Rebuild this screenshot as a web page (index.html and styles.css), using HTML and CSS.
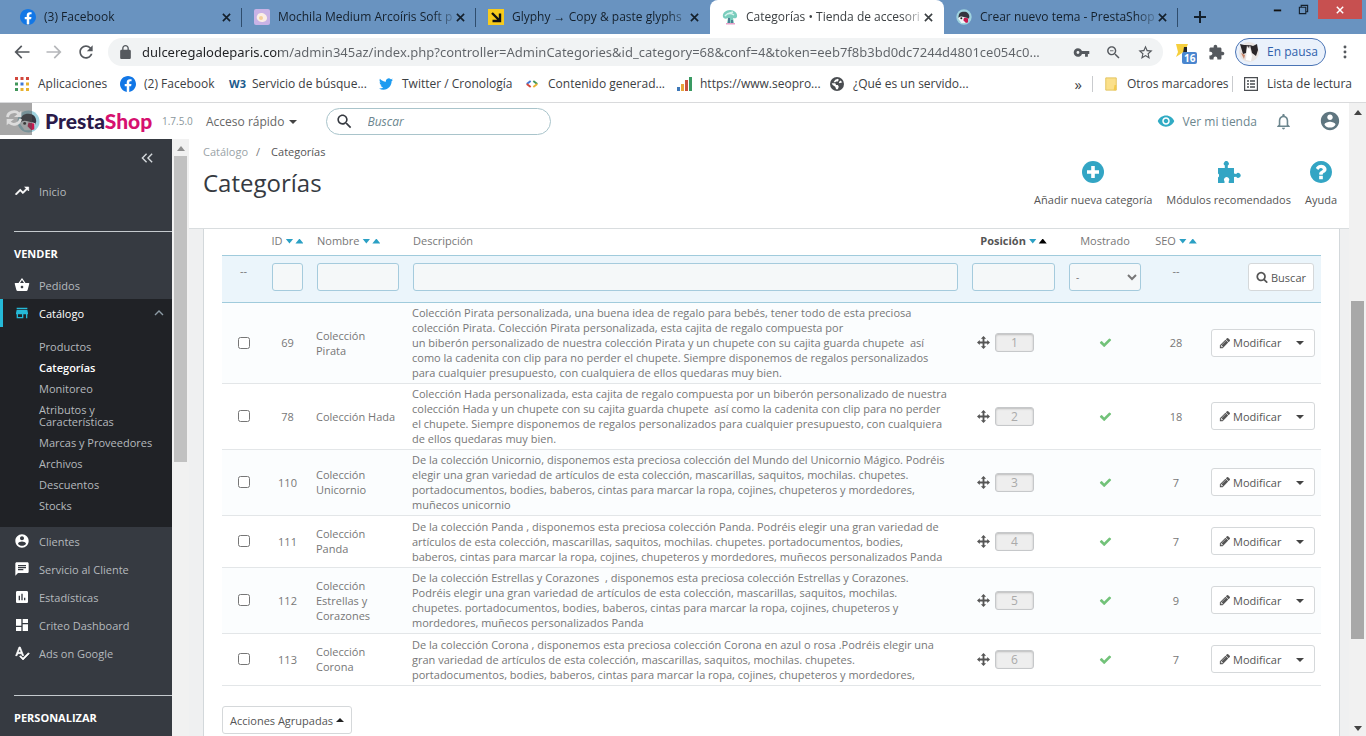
FILE: index.html
```html
<!DOCTYPE html>
<html lang="es">
<head>
<meta charset="utf-8">
<title>Categorías • Tienda de accesorios</title>
<link rel="stylesheet" href="styles.css">
</head>
<body>
<svg class="sprite" aria-hidden="true">
  <symbol id="i-fb" viewBox="0 0 24 24"><circle cx="12" cy="12" r="11" fill="#fff"/><path fill="#1277e6" d="M24 12.073c0-6.627-5.373-12-12-12s-12 5.373-12 12c0 5.99 4.388 10.954 10.125 11.854v-8.385H7.078v-3.47h3.047V9.43c0-3.007 1.792-4.669 4.533-4.669 1.312 0 2.686.235 2.686.235v2.953H15.83c-1.491 0-1.956.925-1.956 1.874v2.25h3.328l-.532 3.47h-2.796v8.385C19.612 23.027 24 18.062 24 12.073z"/></symbol>
  <symbol id="i-close" viewBox="0 0 10 10"><path d="M1 1l8 8M9 1l-8 8" fill="none" stroke="currentColor" stroke-width="1.8"/></symbol>
  <symbol id="i-preston" viewBox="0 0 24 24"><circle cx="12" cy="12" r="11.5" fill="#9fd3df"/><path d="M4 14C3 6 7 4 12 4s8 3 8 8l-1 3H5z" fill="#35363f"/><path d="M3 14c3-4 6-3 9-2s5 1 7 2l-3 7H8z" fill="#eef4f6"/><circle cx="8" cy="14" r="1.5" fill="#222"/><path d="M12 13l6 1 0 6-3 1-4-4z" fill="#c8194f"/></symbol>
  <symbol id="i-search" viewBox="0 0 24 24"><path d="M15.5 14h-.79l-.28-.27C15.41 12.59 16 11.11 16 9.5 16 5.91 13.09 3 9.5 3S3 5.91 3 9.5 5.91 16 9.5 16c1.61 0 3.09-.59 4.23-1.57l.27.28v.79l5 4.99L20.49 19l-4.99-5zm-6 0C7.01 14 5 11.99 5 9.5S7.01 5 9.5 5 14 7.01 14 9.5 11.99 14 9.5 14z"/></symbol>
  <symbol id="i-account" viewBox="0 0 24 24"><path d="M12 2C6.48 2 2 6.48 2 12s4.48 10 10 10 10-4.48 10-10S17.52 2 12 2zm0 3c1.66 0 3 1.34 3 3s-1.34 3-3 3-3-1.34-3-3 1.34-3 3-3zm0 14.2c-2.5 0-4.71-1.28-6-3.22.03-1.99 4-3.08 6-3.08 1.99 0 5.97 1.09 6 3.08-1.29 1.94-3.5 3.22-6 3.22z"/></symbol>
  <symbol id="i-move" viewBox="0 0 14 14"><path d="M7 0l2.8 3H8v3h3V4.200L14 7l-3 2.800V8H8v3h1.800L7 14l-2.800-3H6V8H3v1.800L0 7l3-2.800V6h3V3H4.200z"/></symbol>
  <symbol id="i-check" viewBox="0 0 1792 1792"><path d="M1671 566q0 40-28 68l-724 724-136 136q-28 28-68 28t-68-28l-136-136-362-362q-28-28-28-68t28-68l136-136q28-28 68-28t68 28l294 295 656-657q28-28 68-28t68 28l136 136q28 28 28 68z"/></symbol>
  <symbol id="i-pencil" viewBox="0 0 1792 1792"><path d="M491 1536l91-91-235-235-91 91v107h128v128h107zm523-928q0-22-22-22-10 0-17 7l-542 542q-7 7-7 17 0 22 22 22 10 0 17-7l542-542q7-7 7-17zm-54-192l416 416-832 832h-416v-416zm683 96q0 53-37 90l-166 166-416-416 166-165q36-38 90-38 53 0 91 38l235 234q37 39 37 91z"/></symbol>
</svg>

<header class="chrome">
  <div class="tabs">
    <div class="tab"><svg class="ico16"><use href="#i-fb"/></svg><span class="tab-title">(3) Facebook</span><button class="tab-close" aria-label="Cerrar"><svg><use href="#i-close"/></svg></button></div>
    <div class="tab"><svg class="ico16" viewBox="0 0 16 16"><rect width="16" height="16" rx="2" fill="#c9b3e6"/><path d="M3 10c-1-3 1-6 4-6s6 2 6 5-3 4-5 4-4-1-5-3z" fill="#fbeee6"/><circle cx="7" cy="9" r="2" fill="#f5cf9b"/></svg><span class="tab-title">Mochila Medium Arcoíris Soft p</span><button class="tab-close" aria-label="Cerrar"><svg><use href="#i-close"/></svg></button></div>
    <div class="tab plain"><svg class="ico16" viewBox="0 0 16 16"><rect width="16" height="16" fill="#f8cb1c"/><path d="M4 4l7 7M12 4.500V12H4.500" fill="none" stroke="#111" stroke-width="2.400"/></svg><span class="tab-title">Glyphy → Copy &amp; paste glyphs</span><button class="tab-close" aria-label="Cerrar"><svg><use href="#i-close"/></svg></button></div>
    <div class="tab active"><svg class="ico16" viewBox="0 0 16 16"><path d="M1 8c-1-4 3-7 7-7s8 3 7 7c-1 2-3 1-4 1l1 5H5l1-5C4 10 2 10 1 8z" fill="#79cdbd"/><path d="M3 7c2-3 6-3 9-1M5 5l6-2" stroke="#d6f3ec" stroke-width="1.500" fill="none"/><path d="M6 14V9h2v5zm3-3h2v3H9z" fill="#4b7f93"/><path d="M4 14h9v1.500H4z" fill="#e7a1c8"/></svg><span class="tab-title">Categorías • Tienda de accesori</span><button class="tab-close" aria-label="Cerrar"><svg><use href="#i-close"/></svg></button></div>
    <div class="tab"><svg class="ico16"><use href="#i-preston"/></svg><span class="tab-title">Crear nuevo tema - PrestaShop</span><button class="tab-close" aria-label="Cerrar"><svg><use href="#i-close"/></svg></button></div>
    <button class="new-tab" aria-label="Nueva pestaña"><svg viewBox="0 0 12 12"><path d="M6 0v12M0 6h12" stroke="#14202c" stroke-width="2"/></svg></button>
    <div class="win">
      <button aria-label="Minimizar"><svg viewBox="0 0 12 12"><path d="M2 7h8" stroke="#111" stroke-width="2"/></svg></button>
      <button aria-label="Restaurar"><svg viewBox="0 0 12 12"><path d="M1.500 3.500h7v7h-7zM3.500 3V1.500h7v7H9" fill="none" stroke="#14202c" stroke-width="1.200"/></svg></button>
      <button class="win-close" aria-label="Cerrar ventana"><svg viewBox="0 0 10 10"><path d="M1 1l8 8M9 1l-8 8" stroke="#fff" stroke-width="1.800"/></svg></button>
    </div>
  </div>

  <div class="toolbar">
    <button aria-label="Atrás"><svg viewBox="0 0 24 24"><path d="M21 11H6.800l5.600-5.600L11 4l-8 8 8 8 1.400-1.400L6.800 13H21z"/></svg></button>
    <button class="dim" aria-label="Adelante"><svg viewBox="0 0 24 24"><path d="M13 4l-1.400 1.400 5.600 5.600H3v2h14.200l-5.600 5.600L13 20l8-8z"/></svg></button>
    <button aria-label="Recargar"><svg viewBox="0 0 24 24"><path d="M17.650 6.350C16.200 4.900 14.210 4 12 4c-4.420 0-7.990 3.580-7.990 8s3.570 8 7.990 8c3.730 0 6.840-2.550 7.730-6h-2.080c-.82 2.330-3.040 4-5.650 4-3.310 0-6-2.690-6-6s2.690-6 6-6c1.660 0 3.140.69 4.220 1.780L13 11h7V4l-2.350 2.350z"/></svg></button>
    <div class="omnibox">
      <svg class="lock" viewBox="4 1 16 21"><path d="M18 8h-1V6c0-2.760-2.240-5-5-5S7 3.240 7 6v2H6c-1.100 0-2 .9-2 2v10c0 1.100.9 2 2 2h12c1.100 0 2-.9 2-2V10c0-1.100-.9-2-2-2zM9 6c0-1.660 1.340-3 3-3s3 1.340 3 3v2H9V6z"/></svg>
      <input class="url" type="text" aria-label="Dirección" value="dulceregalodeparis.com/admin345az/index.php?controller=AdminCategories&amp;id_category=68&amp;conf=4&amp;token=eeb7f8b3bd0dc7244d4801ce054c0...">
      <button aria-label="Contraseñas"><svg viewBox="0 0 24 24"><path d="M12.650 10C11.830 7.670 9.610 6 7 6c-3.310 0-6 2.690-6 6s2.690 6 6 6c2.610 0 4.830-1.670 5.650-4H17v4h4v-4h2v-4H12.650zM7 14c-1.100 0-2-.9-2-2s.9-2 2-2 2 .9 2 2-.9 2-2 2z"/></svg></button>
      <button aria-label="Zoom"><svg viewBox="0 0 24 24"><use href="#i-search"/><path d="M7 9h5v1.200H7z"/></svg></button>
      <button aria-label="Favorito"><svg viewBox="0 0 24 24"><path d="M22 9.240l-7.190-.62L12 2 9.190 8.630 2 9.240l5.460 4.730L5.820 21 12 17.270 18.180 21l-1.630-7.030L22 9.240zM12 15.400l-3.760 2.270 1-4.280-3.320-2.880 4.380-.38L12 6.100l1.710 4.040 4.380.38-3.320 2.880 1 4.280L12 15.400z"/></svg></button>
    </div>
    <button class="ext" aria-label="Extensión"><svg viewBox="0 0 16 16"><path d="M0 0h12L9 7 0 13l2-5z" fill="#f6cf3d"/><path d="M8 3h3v6H7z" fill="#222"/></svg><span class="badge">16</span></button>
    <button aria-label="Extensiones"><svg class="puzzle" viewBox="0 0 24 24"><path d="M20.500 11H19V7c0-1.100-.9-2-2-2h-4V3.500C13 2.120 11.880 1 10.500 1S8 2.120 8 3.500V5H4c-1.100 0-1.990.9-1.990 2v3.800H3.500c1.490 0 2.700 1.210 2.700 2.700s-1.210 2.700-2.700 2.700H2V20c0 1.100.9 2 2 2h3.800v-1.500c0-1.490 1.210-2.700 2.700-2.700 1.490 0 2.700 1.210 2.700 2.700V22H17c1.100 0 2-.9 2-2v-4h1.500c1.380 0 2.500-1.120 2.500-2.500S21.880 11 20.500 11z"/></svg></button>
    <button class="profile"><svg viewBox="0 0 20 20"><circle cx="10" cy="10" r="10" fill="#e9e4e2"/><path d="M1 2l4 1 3 0-1 8-3 1zM11 3l3 1 4-2 1 6-2 6-4-3z" fill="#2a2629"/><path d="M7 3l4 0-1 3z" fill="#4a4548"/><path d="M8 6l3 1 2 7-1 5-5-1z" fill="#fff"/><path d="M2 11l4 2-1 4z" fill="#c9876b"/></svg>En pausa</button>
    <button class="kebab" aria-label="Menú"><svg viewBox="0 0 24 24"><circle cx="12" cy="4.500" r="2.200"/><circle cx="12" cy="12" r="2.200"/><circle cx="12" cy="19.500" r="2.200"/></svg></button>
  </div>

  <nav class="bookmarks">
    <a href="#"><svg class="ico14" viewBox="0 0 14 14"><path d="M0 0h3v3H0zM5.500 0h3v3h-3zM11 0h3v3h-3z" fill="#d2473c"/><path d="M0 5.500h3v3H0z" fill="#41965a"/><path d="M5.500 5.500h3v3h-3z" fill="#3f78d8"/><path d="M11 5.500h3v3h-3zM5.500 11h3v3h-3z" fill="#e8b22f"/><path d="M0 11h3v3H0z" fill="#41965a"/><path d="M11 11h3v3h-3z" fill="#e8b22f"/></svg>Aplicaciones</a>
    <a href="#"><svg class="ico16"><use href="#i-fb"/></svg>(2) Facebook</a>
    <a href="#"><b class="w3">W3</b>Servicio de búsque...</a>
    <a href="#"><svg class="ico14" viewBox="0 0 24 24"><path fill="#1d9bf0" d="M23.953 4.570a10 10 0 01-2.825.775 4.958 4.958 0 002.163-2.723c-.951.555-2.005.959-3.127 1.184a4.920 4.920 0 00-8.384 4.482C7.690 8.095 4.067 6.130 1.640 3.162a4.822 4.822 0 00-.666 2.475c0 1.710.87 3.213 2.188 4.096a4.904 4.904 0 01-2.228-.616v.06a4.923 4.923 0 003.946 4.827 4.996 4.996 0 01-2.212.085 4.936 4.936 0 004.604 3.417 9.867 9.867 0 01-6.102 2.105c-.39 0-.779-.023-1.170-.067a13.995 13.995 0 007.557 2.209c9.053 0 13.998-7.496 13.998-13.985 0-.21 0-.42-.015-.63A9.935 9.935 0 0024 4.590z"/></svg>Twitter / Cronología</a>
    <a href="#"><svg class="ico14" viewBox="0 0 16 16"><path d="M6.500 4.500L2 8" stroke="#3f78d8" stroke-width="2.200"/><path d="M2 8l4.500 3.500" stroke="#d2473c" stroke-width="2.200"/><path d="M9.500 4.500L14 8" stroke="#41965a" stroke-width="2.200"/><path d="M14 8l-4.500 3.500" stroke="#e8b22f" stroke-width="2.200"/></svg>Contenido generad...</a>
    <a href="#"><svg class="ico16" viewBox="0 0 16 16"><path d="M1 11h3v4H1z" fill="#3f78b8"/><path d="M5 8h3v7H5z" fill="#e8a43a"/><path d="M9 4h3v11H9z" fill="#c9503f"/><path d="M13 1h3v14h-3z" fill="#3a9a63"/></svg>https://www.seopro...</a>
    <a href="#"><svg class="ico14" viewBox="0 0 16 16"><circle cx="8" cy="8" r="8" fill="#4a4d51"/><path d="M2 7l4 0 1 2h2l1 2-1 3-2 0-1-3-3-2zM6 3l3-1 1 1-1 2H7L6 6H4zM14 6l-3 1-1-1 2-2z" fill="#fff"/></svg>¿Qué es un servido...</a>
    <button class="more" aria-label="Más marcadores">»</button>
    <a href="#" class="ruled"><svg class="ico14" viewBox="0 0 16 16"><path d="M2 1h12v14H2z" fill="#fbe08a" stroke="#e0bf57"/><path d="M12 9h2v6h-3z" fill="#f3c94c"/></svg>Otros marcadores</a>
    <a href="#" class="ruled"><svg class="ico14" viewBox="1 1 14 14"><path d="M1.500 1.500h13v13h-13z" fill="none" stroke="#4a4d51" stroke-width="1.400"/><path d="M4 5h2M7 5h5M4 8h2M7 8h5M4 11h2M7 11h5" stroke="#4a4d51" stroke-width="1.400"/></svg>Lista de lectura</a>
  </nav>
</header>

<div class="viewport">
  <div class="page">
    <header class="top">
      <div class="brand"><svg class="preston" viewBox="0 0 24 24"><use href="#i-preston"/></svg><span class="sync"><svg viewBox="0 0 24 24"><path d="M5 11a7 6 0 0 1 12-4M19 13a7 6 0 0 1-12 4" fill="none" stroke="#dcdcdc" stroke-width="3"/><path d="M20 4v7h-8zM4 20v-7h8z" fill="#dcdcdc"/></svg></span><span class="name">Presta<em>Shop</em></span></div>
      <span class="version">1.7.5.0</span>
      <button class="quick">Acceso rápido <i class="caret"></i></button>
      <label class="search"><svg><use href="#i-search"/></svg><input type="text" placeholder="Buscar" aria-label="Buscar"></label>
      <a class="shop" href="#"><svg viewBox="0 0 24 24"><path d="M12 4.500C7 4.500 2.730 7.610 1 12c1.730 4.390 6 7.500 11 7.500s9.270-3.110 11-7.500c-1.730-4.390-6-7.500-11-7.500zM12 17c-2.760 0-5-2.240-5-5s2.240-5 5-5 5 2.240 5 5-2.240 5-5 5zm0-8c-1.660 0-3 1.340-3 3s1.340 3 3 3 3-1.340 3-3-1.340-3-3-3z"/></svg>Ver mi tienda</a>
      <button class="bell" aria-label="Notificaciones"><svg viewBox="0 0 24 24"><path d="M12 22c1.100 0 2-.9 2-2h-4c0 1.100.9 2 2 2zm6-6v-5c0-3.070-1.630-5.640-4.500-6.320V4c0-.83-.67-1.500-1.500-1.500s-1.500.67-1.500 1.500v.68C7.640 5.360 6 7.920 6 11v5l-2 2v1h16v-1l-2-2zm-2 1H8v-6c0-2.480 1.510-4.500 4-4.500s4 2.020 4 4.500v6z"/></svg></button>
      <button class="user" aria-label="Cuenta"><svg><use href="#i-account"/></svg></button>
    </header>

    <div class="body">
      <nav class="side">
        <button class="collapse" aria-label="Contraer menú"><svg viewBox="0 0 14 10"><path d="M6 0.500L1.500 5 6 9.500M12 0.500L7.500 5 12 9.500" fill="none" stroke="#d5d9dc" stroke-width="1.500"/></svg></button>
        <a class="item" href="#"><svg viewBox="0 0 24 24"><path d="M16 6l2.290 2.290-4.880 4.880-4-4L2 16.590 3.410 18l6-6 4 4 6.300-6.290L22 12V6z" stroke="#fff"/></svg>Inicio</a>
        <h2 class="first">VENDER</h2>
        <a class="item" href="#"><svg viewBox="0 0 24 24"><path d="M17.210 9l-4.380-6.560c-.19-.28-.51-.42-.83-.42-.32 0-.64.14-.83.43L6.790 9H2c-.55 0-1 .45-1 1 0 .09.01.18.04.27l2.540 9.270c.23.84 1 1.460 1.920 1.460h13c.92 0 1.690-.62 1.930-1.460l2.540-9.270L23 10c0-.55-.45-1-1-1h-4.790zM9 9l3-4.400L15 9H9zm3 8c-1.100 0-2-.9-2-2s.9-2 2-2 2 .9 2 2-.9 2-2 2z"/></svg>Pedidos</a>
        <div class="open">
          <a class="item current" href="#"><svg viewBox="0 0 24 24"><path d="M20 4H4v2h16V4zm1 10v-2l-1-5H4l-1 5v2h1v6h10v-6h4v6h2v-6h1zm-9 4H6v-4h6v4z"/></svg>Catálogo<svg class="up" viewBox="0 0 10 6"><path d="M1 5l4-4 4 4" fill="none" stroke="#8d9ba5" stroke-width="1.400"/></svg></a>
          <ul>
            <li><a href="#">Productos</a></li>
            <li><a href="#" class="on">Categorías</a></li>
            <li><a href="#">Monitoreo</a></li>
            <li><a href="#">Atributos y<br>Características</a></li>
            <li><a href="#">Marcas y Proveedores</a></li>
            <li><a href="#">Archivos</a></li>
            <li><a href="#">Descuentos</a></li>
            <li><a href="#">Stocks</a></li>
          </ul>
        </div>
        <a class="item" href="#"><svg><use href="#i-account"/></svg>Clientes</a>
        <a class="item" href="#"><svg viewBox="0 0 24 24"><path d="M20 2H4c-1.100 0-1.990.9-1.990 2L2 22l4-4h14c1.100 0 2-.9 2-2V4c0-1.100-.9-2-2-2zM6 9h12v2H6V9zm8 5H6v-2h8v2zm4-6H6V6h12v2z"/></svg>Servicio al Cliente</a>
        <a class="item" href="#"><svg viewBox="0 0 24 24"><path d="M19 3H5c-1.100 0-2 .9-2 2v14c0 1.100.9 2 2 2h14c1.100 0 2-.9 2-2V5c0-1.100-.9-2-2-2zM9 17H7v-7h2v7zm4 0h-2V7h2v10zm4 0h-2v-4h2v4z"/></svg>Estadísticas</a>
        <a class="item" href="#"><svg viewBox="0 0 24 24"><path d="M3 13h8V3H3v10zm0 8h8v-6H3v6zm10 0h8V11h-8v10zm0-18v6h8V3h-8z"/></svg>Criteo Dashboard</a>
        <a class="item" href="#"><svg viewBox="0 0 24 24"><path d="M12.450 16h2.090L9.430 3H7.570L2.460 16h2.090l1.120-3h5.640l1.140 3zm-6.020-5L8.500 5.480 10.570 11H6.430zm15.160.59l-8.090 8.090L9.830 16l-1.410 1.410 5.090 5.090L23 13l-1.410-1.410z" stroke="#fff"/></svg>Ads on Google</a>
        <h2>PERSONALIZAR</h2>
      </nav>
      <div class="bar side-bar"><i class="arrow up"></i><div class="thumb"></div></div>

      <main>
        <div class="head">
          <div>
            <p class="crumbs"><a href="#">Catálogo</a><span>/</span>Categorías</p>
            <h1>Categorías</h1>
          </div>
          <div class="actions">
            <a href="#"><svg viewBox="0 0 22 22"><circle cx="11" cy="11" r="11"/><path d="M11 5v12M5 11h12" stroke="#fff" stroke-width="3.600"/></svg>Añadir nueva categoría</a>
            <a href="#"><svg class="wide" viewBox="0 0 24 22"><path d="M1 7h6.800V4.600A2.500 2.500 0 1 1 10.800 4.600V7H17v5.600l2.200.4A2.400 2.400 0 1 1 19.200 15.800L17 16v6h-5.300v-1.800a2.600 2.600 0 1 0-4.200 0V22H1v-5.500l1-1v-2l-1-1z"/></svg>Módulos recomendados</a>
            <a href="#"><svg viewBox="128 128 1536 1536"><path d="M1024 1376v-192q0-14-9-23t-23-9h-192q-14 0-23 9t-9 23v192q0 14 9 23t23 9h192q14 0 23-9t9-23zm256-672q0-88-55.500-163t-138.500-116-170-41q-243 0-371 213-15 24 8 42l132 100q7 6 19 6 16 0 25-12 53-68 86-92 34-24 86-24 48 0 85.500 26t37.500 59q0 38-20 61t-68 45q-63 28-115.500 86.500t-52.500 125.500v36q0 14 9 23t23 9h192q14 0 23-9t9-23q0-19 21.500-49.500t54.500-49.500q32-18 49-28.500t46-35 44.500-48 28-60.500 12.500-81zm384 192q0 209-103 385.500t-279.500 279.500-385.500 103-385.500-103-279.500-279.500-103-385.500 103-385.500 279.500-279.500 385.500-103 385.500 103 279.500 279.500 103 385.500z"/></svg>Ayuda</a>
          </div>
        </div>

        <section class="panel">
          <table>
            <colgroup><col class="c-check"><col class="c-id"><col class="c-name"><col><col class="c-pos"><col class="c-show"><col class="c-seo"><col class="c-act"></colgroup>
            <thead>
              <tr>
                <th></th>
                <th class="mid">ID <i class="sort"></i></th>
                <th>Nombre <i class="sort"></i></th>
                <th>Descripción</th>
                <th class="mid"><b>Posición</b> <i class="sort asc"></i></th>
                <th class="mid">Mostrado</th>
                <th class="mid seo">SEO <i class="sort"></i></th>
                <th></th>
              </tr>
              <tr class="filter">
                <td class="mid dash">--</td>
                <td><input type="text" aria-label="ID"></td>
                <td><input type="text" aria-label="Nombre"></td>
                <td><input type="text" aria-label="Descripción"></td>
                <td><input type="text" aria-label="Posición"></td>
                <td><select aria-label="Mostrado"><option>-</option></select></td>
                <td class="mid dash">--</td>
                <td class="right"><button class="btn"><svg class="lens" viewBox="0 0 1792 1792"><path d="M1216 832q0-185-131.500-316.500t-316.500-131.500-316.500 131.500-131.500 316.500 131.500 316.500 316.500 131.500 316.500-131.500 131.500-316.500zm512 832q0 52-38 90t-90 38q-54 0-90-38l-343-342q-179 124-399 124-143 0-273.500-55.500t-225-150-150-225-55.500-273.500 55.500-273.500 150-225 225-150 273.500-55.500 273.500 55.500 225 150 150 225 55.500 273.500q0 220-124 399l343 343q37 37 37 90z"/></svg>Buscar</button></td>
              </tr>
            </thead>
            <tbody>
              <tr>
                <td class="mid"><input type="checkbox" aria-label="69"></td><td class="mid">69</td><td>Colección<br>Pirata</td>
                <td class="desc">Colección Pirata personalizada, una buena idea de regalo para bebés, tener todo de esta preciosa<br>colección Pirata. Colección Pirata personalizada, esta cajita de regalo compuesta por<br>un biberón personalizado de nuestra colección Pirata y un chupete con su cajita guarda chupete&nbsp; así<br>como la cadenita con clip para no perder el chupete. Siempre disponemos de regalos personalizados<br>para cualquier presupuesto, con cualquiera de ellos quedaras muy bien.</td>
                <td><div class="pos"><svg><use href="#i-move"/></svg><span>1</span></div></td><td class="mid"><svg class="ok"><use href="#i-check"/></svg></td><td class="mid">28</td>
                <td class="right"><div class="split"><a href="#"><svg><use href="#i-pencil"/></svg>Modificar</a><button aria-label="Más acciones"><i class="caret"></i></button></div></td>
              </tr>
              <tr>
                <td class="mid"><input type="checkbox" aria-label="78"></td><td class="mid">78</td><td>Colección Hada</td>
                <td class="desc">Colección Hada personalizada, esta cajita de regalo compuesta por un biberón personalizado de nuestra<br>colección Hada y un chupete con su cajita guarda chupete&nbsp; así como la cadenita con clip para no perder<br>el chupete. Siempre disponemos de regalos personalizados para cualquier presupuesto, con cualquiera<br>de ellos quedaras muy bien.</td>
                <td><div class="pos"><svg><use href="#i-move"/></svg><span>2</span></div></td><td class="mid"><svg class="ok"><use href="#i-check"/></svg></td><td class="mid">18</td>
                <td class="right"><div class="split"><a href="#"><svg><use href="#i-pencil"/></svg>Modificar</a><button aria-label="Más acciones"><i class="caret"></i></button></div></td>
              </tr>
              <tr>
                <td class="mid"><input type="checkbox" aria-label="110"></td><td class="mid">110</td><td>Colección<br>Unicornio</td>
                <td class="desc">De la colección Unicornio, disponemos esta preciosa colección del Mundo del Unicornio Mágico. Podréis<br>elegir una gran variedad de artículos de esta colección, mascarillas, saquitos, mochilas. chupetes.<br>portadocumentos, bodies, baberos, cintas para marcar la ropa, cojines, chupeteros y mordedores,<br>muñecos unicornio</td>
                <td><div class="pos"><svg><use href="#i-move"/></svg><span>3</span></div></td><td class="mid"><svg class="ok"><use href="#i-check"/></svg></td><td class="mid">7</td>
                <td class="right"><div class="split"><a href="#"><svg><use href="#i-pencil"/></svg>Modificar</a><button aria-label="Más acciones"><i class="caret"></i></button></div></td>
              </tr>
              <tr>
                <td class="mid"><input type="checkbox" aria-label="111"></td><td class="mid">111</td><td>Colección<br>Panda</td>
                <td class="desc">De la colección Panda , disponemos esta preciosa colección Panda. Podréis elegir una gran variedad de<br>artículos de esta colección, mascarillas, saquitos, mochilas. chupetes. portadocumentos, bodies,<br>baberos, cintas para marcar la ropa, cojines, chupeteros y mordedores, muñecos personalizados Panda</td>
                <td><div class="pos"><svg><use href="#i-move"/></svg><span>4</span></div></td><td class="mid"><svg class="ok"><use href="#i-check"/></svg></td><td class="mid">7</td>
                <td class="right"><div class="split"><a href="#"><svg><use href="#i-pencil"/></svg>Modificar</a><button aria-label="Más acciones"><i class="caret"></i></button></div></td>
              </tr>
              <tr>
                <td class="mid"><input type="checkbox" aria-label="112"></td><td class="mid">112</td><td>Colección<br>Estrellas y<br>Corazones</td>
                <td class="desc">De la colección Estrellas y Corazones&nbsp; , disponemos esta preciosa colección Estrellas y Corazones.<br>Podréis elegir una gran variedad de artículos de esta colección, mascarillas, saquitos, mochilas.<br>chupetes. portadocumentos, bodies, baberos, cintas para marcar la ropa, cojines, chupeteros y<br>mordedores, muñecos personalizados Panda</td>
                <td><div class="pos"><svg><use href="#i-move"/></svg><span>5</span></div></td><td class="mid"><svg class="ok"><use href="#i-check"/></svg></td><td class="mid">9</td>
                <td class="right"><div class="split"><a href="#"><svg><use href="#i-pencil"/></svg>Modificar</a><button aria-label="Más acciones"><i class="caret"></i></button></div></td>
              </tr>
              <tr>
                <td class="mid"><input type="checkbox" aria-label="113"></td><td class="mid">113</td><td>Colección<br>Corona</td>
                <td class="desc">De la colección Corona , disponemos esta preciosa colección Corona en azul o rosa .Podréis elegir una<br>gran variedad de artículos de esta colección, mascarillas, saquitos, mochilas. chupetes.<br>portadocumentos, bodies, baberos, cintas para marcar la ropa, cojines, chupeteros y mordedores,</td>
                <td><div class="pos"><svg><use href="#i-move"/></svg><span>6</span></div></td><td class="mid"><svg class="ok"><use href="#i-check"/></svg></td><td class="mid">7</td>
                <td class="right"><div class="split"><a href="#"><svg><use href="#i-pencil"/></svg>Modificar</a><button aria-label="Más acciones"><i class="caret"></i></button></div></td>
              </tr>
            </tbody>
          </table>
          <button class="btn bulk">Acciones Agrupadas <i class="caret flip"></i></button>
        </section>
      </main>
    </div>
  </div>
  <div class="bar page-bar"><i class="arrow up"></i><div class="thumb"></div><i class="arrow down"></i></div>
</div>
</body>
</html>
```

FILE: styles.css
```css
* { box-sizing: border-box; }

body {
  margin: 0;
  height: 100vh;
  display: flex;
  flex-direction: column;
  overflow: hidden;
  font: 11px/15px "Open Sans", "Noto Sans", sans-serif;
  color: #777;
  background: #fff;
}

a { color: inherit; text-decoration: none; }
button, input, select { font: inherit; color: inherit; }
button { padding: 0; border: 0; background: none; }
svg { display: block; flex: none; fill: currentColor; }
.sprite { position: absolute; width: 0; height: 0; }
.ico16 { width: 16px; height: 16px; }
.ico14 { width: 14px; height: 14px; margin-right: 1px; }

/* Browser window */
.chrome {
  flex: none;
  border-bottom: 1px solid #d9dadc;
  font: 12px/16px "Open Sans", "Noto Sans", sans-serif;
  color: #3c4043;
}

.tabs { display: flex; height: 34px; padding-left: 8px; background: #6993c0; color: #14202c; }
.tab { display: flex; align-items: center; flex: 0 1 234px; min-width: 0; gap: 8px; padding: 0 11px 0 12px; position: relative; }
.tab:not(.plain):not(.active)::after { content: ""; position: absolute; right: 0; top: 8px; width: 1px; height: 19px; background: #2f4d6d; }
.tab.active { background: #fff; border-radius: 8px 8px 0 0; color: #3c4043; }
.tab-title { flex: 1; min-width: 0; overflow: hidden; white-space: nowrap; margin-right: -6px; mask-image: linear-gradient(to right, #000 88%, rgba(0, 0, 0, .2)); }
.tab-close svg { width: 9px; height: 9px; }
.new-tab { width: 44px; display: grid; place-items: center; }
.new-tab svg { width: 12px; height: 12px; }
.win { margin-left: auto; display: flex; align-items: flex-start; padding-right: 4px; }
.win button { width: 26px; height: 19px; display: grid; place-items: center; }
.win svg { width: 11px; height: 11px; }
.win .win-close { width: 44px; margin-left: 2px; background: #c75050; }
.win .win-close svg { width: 8px; height: 8px; }

.toolbar { display: flex; align-items: center; height: 36px; padding: 0 10px 0 12px; color: #55595e; }
.toolbar > button { width: 32px; display: grid; place-items: center start; }
.toolbar svg { width: 20px; height: 20px; }
.toolbar .dim { color: #b5b7ba; }
.omnibox { flex: 1; display: flex; align-items: center; height: 28px; padding: 0 2px 0 12px; border-radius: 14px; background: #f1f3f4; }
.omnibox .lock { width: 11px; height: 14px; margin-right: 11px; }
.omnibox button { width: 32px; display: grid; place-items: center; }
.omnibox button svg { width: 17px; height: 17px; }
.url {
  flex: 1; min-width: 0; padding: 0; border: 0; outline: 0;
  font-family: "Noto Sans", sans-serif; font-size: 13px; line-height: 20px; color: transparent;
  background: linear-gradient(to right, #202124 137px, #5f6368 137px);
  background-clip: text; -webkit-background-clip: text;
}
.toolbar .ext { position: relative; margin-left: 13px; }
.toolbar .ext svg { width: 16px; height: 16px; }
.badge { position: absolute; left: 6px; top: 8px; padding: 0 2px; border-radius: 2px; background: #4a86cf; color: #fff; font-size: 10px; font-weight: 700; line-height: 12px; }
.toolbar .puzzle { width: 17px; height: 17px; }
.toolbar .profile { display: flex; align-items: center; gap: 8px; width: 91px; height: 28px; margin-left: -5px; padding-left: 3px; border: 1px solid #4a74b5; border-radius: 14px; background: #eaf1fb; color: #2f5fab; white-space: nowrap; }
.toolbar .kebab { width: 20px; margin-left: 10px; }
.kebab svg { width: 18px; height: 16px; }

.bookmarks { display: grid; grid-template-columns: 105px 109px 150px 146px 151px 154px 1fr 35px 140px auto; align-items: center; height: 32px; padding: 0 14px 4px 15px; white-space: nowrap; }
.bookmarks a { display: flex; align-items: center; gap: 8px; }
.bookmarks .more { justify-self: end; margin-right: 10px; font-size: 15px; }
.bookmarks .ruled { padding-left: 11px; border-left: 1px solid #c9cbce; }
.w3 { width: 15px; color: #1c5a8c; font-size: 11px; }

/* Scroll bars */
.viewport { flex: 1; min-height: 0; display: flex; }
.page { flex: 1; min-width: 0; display: flex; flex-direction: column; }
.bar { flex: none; width: 17px; display: flex; flex-direction: column; align-items: center; background: #f1f1f1; }
.bar .thumb { width: 13px; background: #c1c1c1; }
.bar .arrow { border: 4px solid transparent; border-top-width: 0; border-bottom: 5px solid #8e8e8e; margin: 7px 0 5px; }
.side-bar .thumb { flex: 0 0 306px; }
.page-bar .thumb { flex: 0 0 338px; margin: 181px 0 auto; background: #a8a8a8; }
.page-bar .arrow { border-bottom-color: #444; }
.page-bar .arrow.down { border-bottom: 0; border-top: 5px solid #444; }

/* Back office header */
.top { display: flex; align-items: center; height: 36px; flex: none; font-size: 12px; color: #6c868e; }
.brand { position: relative; display: flex; align-items: center; height: 36px; width: 162px; padding-left: 17px; }
.preston { width: 23px; height: 23px; }
.sync { position: absolute; left: 0; top: 0; width: 32px; height: 32px; background: rgba(80, 80, 80, .5); }
.sync svg { width: 22px; height: 24px; margin: 3px 0 0 3px; }
.name { margin-left: 5px; font: 900 21px/24px Lato, sans-serif; color: #2a1a4a; }
.name em { font-style: normal; color: #d6106f; }
.version { width: 44px; font-size: 10px; color: #8a979c; }
.quick { color: #666; }
.caret { display: inline-block; margin-left: 1px; vertical-align: 2px; border: 4px solid transparent; border-top-color: #444; border-bottom-width: 0; }
.caret.flip { border-top-width: 0; border-bottom: 4px solid #222; vertical-align: 1px; }
.search { display: flex; align-items: center; width: 225px; height: 27px; margin-left: 29px; padding: 0 8px; border: 1px solid #a9c4cb; border-radius: 14px; }
.search svg { width: 19px; height: 19px; color: #363a41; }
.search input { flex: 1; min-width: 0; margin-left: 14px; padding: 0; border: 0; outline: 0; background: none; }
.search input::placeholder { color: #6c868e; font-style: italic; }
.shop { display: flex; align-items: center; gap: 7px; margin-left: auto; }
.shop svg { width: 18px; height: 18px; color: #30abc4; }
.bell { margin-left: 17px; color: #6c868e; }
.bell svg { width: 19px; height: 19px; }
.user { margin: 0 8px 0 26px; color: #5f7680; }
.user svg { width: 22px; height: 22px; }

/* Side menu */
.body { flex: 1; min-height: 0; display: flex; }
.side { flex: none; width: 172px; overflow: hidden; background: #363a41; color: #b5b9bd; }
.collapse { display: block; margin: 14px 18px 14px auto; }
.collapse svg { width: 13px; height: 10px; }
.item { display: flex; align-items: center; gap: 9px; height: 28px; padding-left: 14px; }
.item svg { width: 16px; height: 16px; color: #fff; }
.side h2 { margin: 28px 0 0 14px; padding-top: 14px; border-top: 1px solid #c5cace; color: #fff; font-size: 11px; line-height: 15px; }
.side h2.first { margin: 26px 0 10px 14px; }
.open { background: #202226; }
.item.current { padding: 0 8px 0 11px; border-left: 3px solid #25b9d7; color: #fff; }
.item.current svg { color: #25b9d7; }
.item .up { width: 10px; height: 6px; margin-left: auto; }
.open ul { margin: 0; padding: 10px 0 10px 39px; list-style: none; }
.open li { padding: 4px 0 5px; line-height: 12px; white-space: nowrap; }
.open .on { color: #fff; font-weight: 600; }

/* Page heading */
main { flex: 1; min-width: 0; display: flex; flex-direction: column; background: #eff0f1; }
.head { display: flex; justify-content: space-between; align-items: flex-start; height: 90px; flex: none; padding: 5px 12px 0 14px; border-bottom: 1px solid #d9dddf; background: #fff; }
.crumbs { margin: 0; color: #555; }
.crumbs a { color: #9aa3a7; }
.crumbs span { margin: 0 11px 0 8px; color: #777; }
h1 { margin: 8px 0 0; font-size: 24px; font-weight: 400; line-height: 32px; color: #363a41; }
.actions { display: flex; gap: 14px; padding-top: 17px; font-size: 11px; color: #555; }
.actions a { display: flex; flex-direction: column; align-items: center; gap: 9px; white-space: nowrap; }
.actions svg { width: 22px; height: 22px; color: #33a5c4; }
.actions .wide { width: 24px; }

/* List */
.panel { flex: 1; margin: 0 9px 0 14px; padding: 0 18px; border: solid #d3d8db; border-width: 0 1px; background: #fff; }
table { width: 100%; table-layout: fixed; border-collapse: separate; border-spacing: 0; }
.c-check { width: 43px; }
.c-id { width: 45px; }
.c-name { width: 96px; }
.c-pos { width: 97px; }
.c-show { width: 86px; }
.c-seo { width: 56px; }
.c-act { width: 117px; }
th { height: 27px; padding: 0 7px 4px; text-align: left; font-weight: 400; white-space: nowrap; border-bottom: 1px solid #a0cbdc; }
th.seo, th:nth-child(2) { padding: 0 0 4px; }
.mid { text-align: center; }
.right { text-align: right; }
th.mid { text-align: center; }
th b { color: #555; }
.sort { display: inline-block; width: 18px; height: 5px; vertical-align: 1px; background: #2ba0c4; clip-path: polygon(0 0, 8px 0, 4px 5px, 4px 5px, 0 0, 10px 5px, 14px 0, 18px 5px, 10px 5px); }
.sort.asc { background: linear-gradient(to right, #2ba0c4 9px, #000 9px); }
.filter td { height: 47px; padding: 7px 7px 11px; border-bottom: 1px solid #a0cbdc; background: #ebf5fb; }
.filter .dash { vertical-align: top; }
.filter input, .filter select { display: block; width: 100%; height: 28px; padding: 0 6px; border: 1px solid #a5cbdd; border-radius: 3px; background: #f5f8f9; font-size: 10px; }
.filter select { padding: 0 2px; }
.btn { display: inline-flex; align-items: center; height: 28px; padding: 0 7px; border: 1px solid #d5d8da; border-radius: 3px; background: #fff; color: #555; white-space: nowrap; }
.lens { width: 12px; height: 12px; margin-right: 3px; }
.bulk { margin-top: 20px; gap: 2px; }
tbody td { height: 52px; padding: 2px 6px 3px; border-bottom: 1px solid #e3e6e8; }
tbody tr:nth-child(odd) { background: #fbfdfe; }
.desc { white-space: nowrap; }
tbody input { display: block; width: 12px; height: 12px; margin: 0 auto; }
.pos { display: flex; align-items: center; gap: 5px; padding-left: 6px; }
.pos svg { width: 13px; height: 13px; color: #555; }
.pos span { width: 39px; height: 19px; border: 1px solid #c6c8ca; border-radius: 3px; background: #eee; box-shadow: inset 0 1px 2px #bbb; color: #aaa; font-size: 12px; line-height: 17px; text-align: center; }
.ok { width: 13px; height: 13px; margin: 0 auto; color: #72c279; }
.split { display: inline-flex; align-items: center; justify-content: space-between; width: 104px; height: 28px; padding: 0 10px 0 7px; border: 1px solid #d5d8da; border-radius: 3px; background: #fff; color: #555; vertical-align: middle; }
.split a { display: flex; align-items: center; gap: 2px; }
.split svg { width: 12px; height: 12px; }
```
